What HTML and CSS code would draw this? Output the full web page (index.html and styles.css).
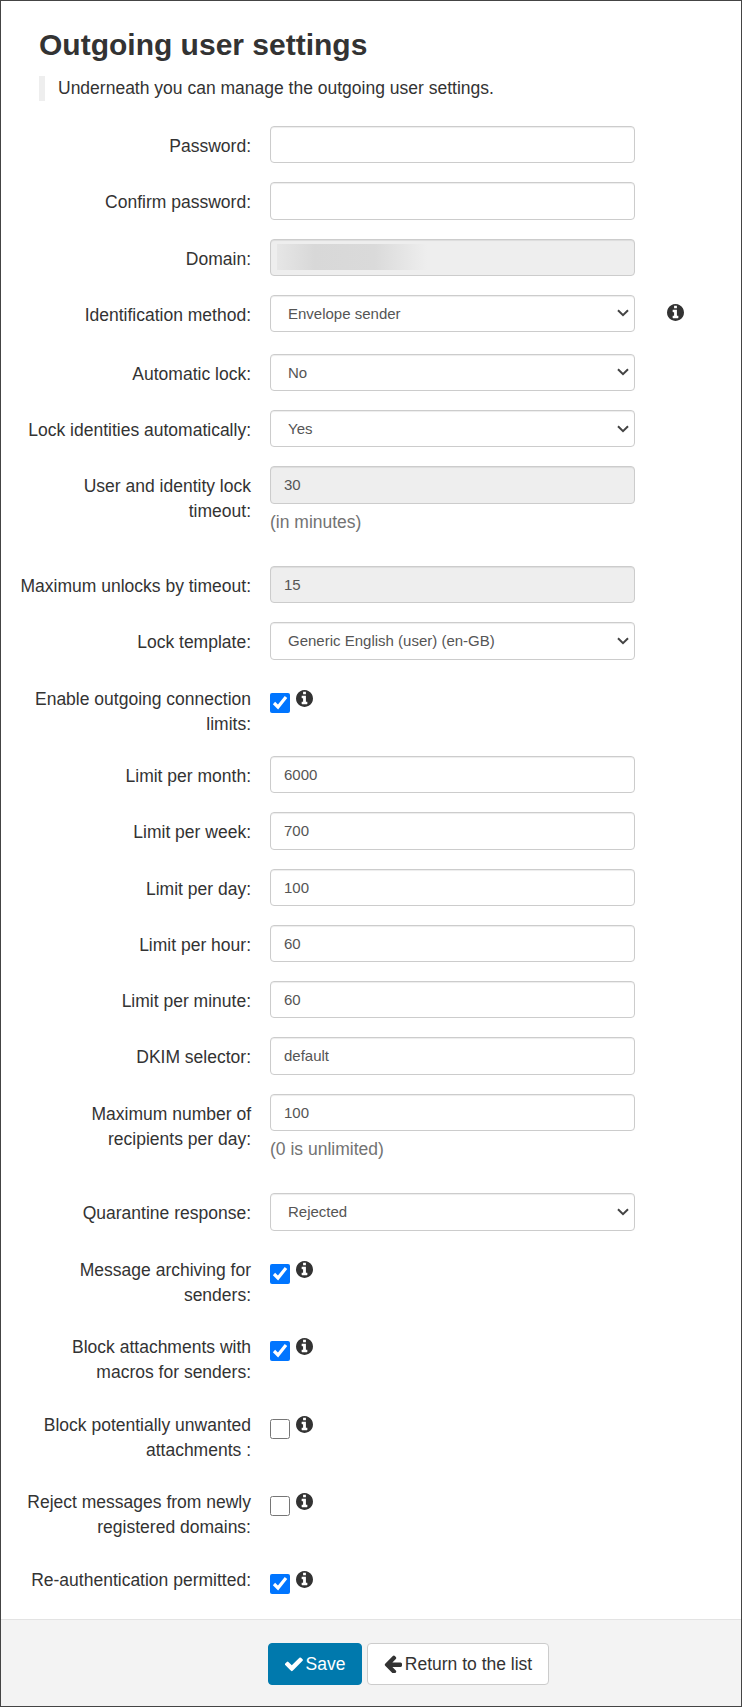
FILE: index.html
```html
<!DOCTYPE html>
<html lang="en">
<head>
    <meta charset="UTF-8">
    <title>Outgoing user settings</title>
    <link rel="stylesheet" href="styles.css">
</head>
<body>
    <svg class="icon-defs" xmlns="http://www.w3.org/2000/svg">
        <symbol id="icon-info" viewBox="128 128 1536 1536">
            <path d="M1152 1376v-160q0-14-9-23t-23-9h-96v-512q0-14-9-23t-23-9h-320q-14 0-23 9t-9 23v160q0 14 9 23t23 9h96v320h-96q-14 0-23 9t-9 23v160q0 14 9 23t23 9h448q14 0 23-9t9-23zm-128-896v-160q0-14-9-23t-23-9h-192q-14 0-23 9t-9 23v160q0 14 9 23t23 9h192q14 0 23-9t9-23zm640 416q0 209-103 385.5t-279.5 279.5-385.5 103-385.5-103-279.5-279.5-103-385.5 103-385.5 279.5-279.5 385.5-103 385.5 103 279.5 279.5 103 385.5z"/>
        </symbol>
        <symbol id="icon-check" viewBox="128 128 1552 1552">
            <path d="M1671 566q0 40-28 68l-724 724-136 136q-28 28-68 28t-68-28l-136-136-362-362q-28-28-28-68t28-68l136-136q28-28 68-28t68 28l294 295 656-657q28-28 68-28t68 28l136 136q28 28 28 68z"/>
        </symbol>
        <symbol id="icon-arrow" viewBox="128 128 1536 1536">
            <path d="M1664 896v128q0 53-32.5 90.5t-84.5 37.5h-704l293 294q38 36 38 90t-38 90l-75 76q-37 37-90 37-52 0-91-37l-651-652q-37-37-37-90 0-52 37-91l651-650q38-38 91-38 52 0 90 38l75 74q38 38 38 91t-38 91l-293 293h704q52 0 84.5 37.5t32.5 90.5z"/>
        </symbol>
    </svg>

    <div class="panel">
        <div class="content">
            <h1>Outgoing user settings</h1>
            <p class="intro">Underneath you can manage the outgoing user settings.</p>

            <form class="settings-form">
                <div class="form-row">
                    <label class="form-label">Password:</label>
                    <div class="form-field"><input type="password" class="input-field"></div>
                </div>
                <div class="form-row">
                    <label class="form-label">Confirm password:</label>
                    <div class="form-field"><input type="password" class="input-field"></div>
                </div>
                <div class="form-row">
                    <label class="form-label">Domain:</label>
                    <div class="form-field"><div class="input-field input-disabled domain-box"><span class="domain-blur"></span></div></div>
                </div>
                <div class="form-row row-tall">
                    <label class="form-label">Identification method:</label>
                    <div class="form-field">
                        <select class="select-field"><option>Envelope sender</option></select>
                    </div>
                    <svg class="icon-info icon-side"><use href="#icon-info"/></svg>
                </div>
                <div class="form-row">
                    <label class="form-label">Automatic lock:</label>
                    <div class="form-field">
                        <select class="select-field"><option>No</option></select>
                    </div>
                </div>
                <div class="form-row">
                    <label class="form-label">Lock identities automatically:</label>
                    <div class="form-field">
                        <select class="select-field"><option>Yes</option></select>
                    </div>
                </div>
                <div class="form-row row-help">
                    <label class="form-label">User and identity lock timeout:</label>
                    <div class="form-field">
                        <input type="text" class="input-field" value="30" disabled>
                        <p class="help-text">(in minutes)</p>
                    </div>
                </div>
                <div class="form-row">
                    <label class="form-label">Maximum unlocks by timeout:</label>
                    <div class="form-field"><input type="text" class="input-field" value="15" disabled></div>
                </div>
                <div class="form-row">
                    <label class="form-label">Lock template:</label>
                    <div class="form-field">
                        <select class="select-field"><option>Generic English (user) (en-GB)</option></select>
                    </div>
                </div>
                <div class="form-row row-check">
                    <label class="form-label">Enable outgoing connection limits:</label>
                    <div class="check-field">
                        <input type="checkbox" class="check-input" checked>
                        <svg class="icon-info"><use href="#icon-info"/></svg>
                    </div>
                </div>
                <div class="form-row">
                    <label class="form-label">Limit per month:</label>
                    <div class="form-field"><input type="text" class="input-field" value="6000"></div>
                </div>
                <div class="form-row">
                    <label class="form-label">Limit per week:</label>
                    <div class="form-field"><input type="text" class="input-field" value="700"></div>
                </div>
                <div class="form-row">
                    <label class="form-label">Limit per day:</label>
                    <div class="form-field"><input type="text" class="input-field" value="100"></div>
                </div>
                <div class="form-row">
                    <label class="form-label">Limit per hour:</label>
                    <div class="form-field"><input type="text" class="input-field" value="60"></div>
                </div>
                <div class="form-row">
                    <label class="form-label">Limit per minute:</label>
                    <div class="form-field"><input type="text" class="input-field" value="60"></div>
                </div>
                <div class="form-row">
                    <label class="form-label">DKIM selector:</label>
                    <div class="form-field"><input type="text" class="input-field" value="default"></div>
                </div>
                <div class="form-row row-help">
                    <label class="form-label">Maximum number of recipients per day:</label>
                    <div class="form-field">
                        <input type="text" class="input-field" value="100">
                        <p class="help-text">(0 is unlimited)</p>
                    </div>
                </div>
                <div class="form-row">
                    <label class="form-label">Quarantine response:</label>
                    <div class="form-field">
                        <select class="select-field"><option>Rejected</option></select>
                    </div>
                </div>
                <div class="form-row row-check">
                    <label class="form-label">Message archiving for senders:</label>
                    <div class="check-field">
                        <input type="checkbox" class="check-input" checked>
                        <svg class="icon-info"><use href="#icon-info"/></svg>
                    </div>
                </div>
                <div class="form-row row-check">
                    <label class="form-label">Block attachments with macros for senders:</label>
                    <div class="check-field">
                        <input type="checkbox" class="check-input" checked>
                        <svg class="icon-info"><use href="#icon-info"/></svg>
                    </div>
                </div>
                <div class="form-row row-check">
                    <label class="form-label">Block potentially unwanted attachments :</label>
                    <div class="check-field">
                        <input type="checkbox" class="check-input">
                        <svg class="icon-info"><use href="#icon-info"/></svg>
                    </div>
                </div>
                <div class="form-row row-check">
                    <label class="form-label">Reject messages from newly registered domains:</label>
                    <div class="check-field">
                        <input type="checkbox" class="check-input">
                        <svg class="icon-info"><use href="#icon-info"/></svg>
                    </div>
                </div>
                <div class="form-row row-check">
                    <label class="form-label">Re-authentication permitted:</label>
                    <div class="check-field">
                        <input type="checkbox" class="check-input" checked>
                        <svg class="icon-info"><use href="#icon-info"/></svg>
                    </div>
                </div>
            </form>
        </div>

        <div class="footer">
            <button type="button" class="btn btn-save"><svg class="btn-icon"><use href="#icon-check"/></svg>Save</button>
            <button type="button" class="btn btn-back"><svg class="btn-icon"><use href="#icon-arrow"/></svg>Return to the list</button>
        </div>
    </div>
</body>
</html>
```

FILE: styles.css
```css
* {
    margin: 0;
    padding: 0;
    box-sizing: border-box;
}

body {
    font-family: "Liberation Sans", Arial, sans-serif;
    font-size: 17.5px;
    color: #333;
    background: white;
}

.icon-defs {
    display: none;
}

.panel {
    height: 1707px;
    border: 1px solid #444;
    display: flex;
    flex-direction: column;
}

.content {
    flex: 1;
    padding: 27px 15px 0 15px;
}

h1 {
    font-size: 30px;
    font-weight: 700;
    line-height: 34px;
    margin-left: 23px;
    margin-bottom: 14px;
}

.intro {
    margin-left: 23px;
    padding-left: 13px;
    border-left: 6px solid #eee;
    height: 25px;
    line-height: 24px;
    margin-bottom: 25px;
}

.form-row {
    display: flex;
    align-items: flex-start;
    margin-bottom: 19px;
}

.row-tall {
    margin-bottom: 21.75px;
}

.row-help {
    margin-bottom: 31.5px;
}

.row-check {
    margin-bottom: 19.5px;
}

.form-label {
    width: 235px;
    flex-shrink: 0;
    text-align: right;
    line-height: 25px;
    padding: 8px 0 0 3px;
}

.form-field {
    width: 365px;
    margin-left: 19px;
    flex-shrink: 0;
}

.input-field,
.select-field {
    display: block;
    width: 100%;
    height: 37.25px;
    border: 1px solid #ccc;
    border-radius: 4px;
    font-family: inherit;
    font-size: 15px;
    color: #555;
    background-color: white;
    box-shadow: inset 0 1px 1px rgba(0, 0, 0, 0.075);
}

.input-field {
    padding: 6px 13px;
}

.select-field {
    appearance: none;
    padding: 6px 17px;
    background-image: url("data:image/svg+xml,%3Csvg xmlns='http://www.w3.org/2000/svg' width='12' height='8'%3E%3Cpath d='M1 1.2l5 5 5-5' fill='none' stroke='%23444' stroke-width='2'/%3E%3C/svg%3E");
    background-repeat: no-repeat;
    background-position: right 5px center;
}

.input-field:disabled,
.input-disabled {
    background: #eee;
}

.domain-box {
    padding: 4px 6px;
}

.domain-blur {
    display: block;
    width: 150px;
    height: 26px;
    background: linear-gradient(90deg, #e6e6e6 0%, #d8d8d8 25%, #dadada 65%, #eee 100%);
}

.help-text {
    color: #737373;
    margin-top: 6px;
    line-height: 25px;
}

.check-field {
    margin-left: 19px;
    display: flex;
    align-items: flex-start;
    gap: 6px;
}

.check-input {
    width: 20px;
    height: 20px;
    margin-top: 14px;
}

.check-field .icon-info {
    margin-top: 11px;
}

.icon-info {
    width: 17px;
    height: 17px;
    fill: #333;
    flex-shrink: 0;
}

.icon-side {
    margin-left: 32px;
    margin-top: 9px;
}

.footer {
    height: 87px;
    background: #f3f3f3;
    border-top: 1px solid #e3e3e3;
    display: flex;
    gap: 5px;
    padding: 23px 0 0 267px;
}

.btn {
    height: 42px;
    border-radius: 4px;
    font-family: inherit;
    font-size: 17.5px;
    display: flex;
    align-items: center;
    justify-content: center;
    gap: 3px;
}

.btn-icon {
    width: 18px;
    height: 18px;
    fill: currentColor;
}

.btn-save {
    width: 94px;
    background: #0079ad;
    border: 1px solid #0079ad;
    color: white;
}

.btn-back {
    width: 182px;
    background: white;
    border: 1px solid #ccc;
    color: #333;
}
```
